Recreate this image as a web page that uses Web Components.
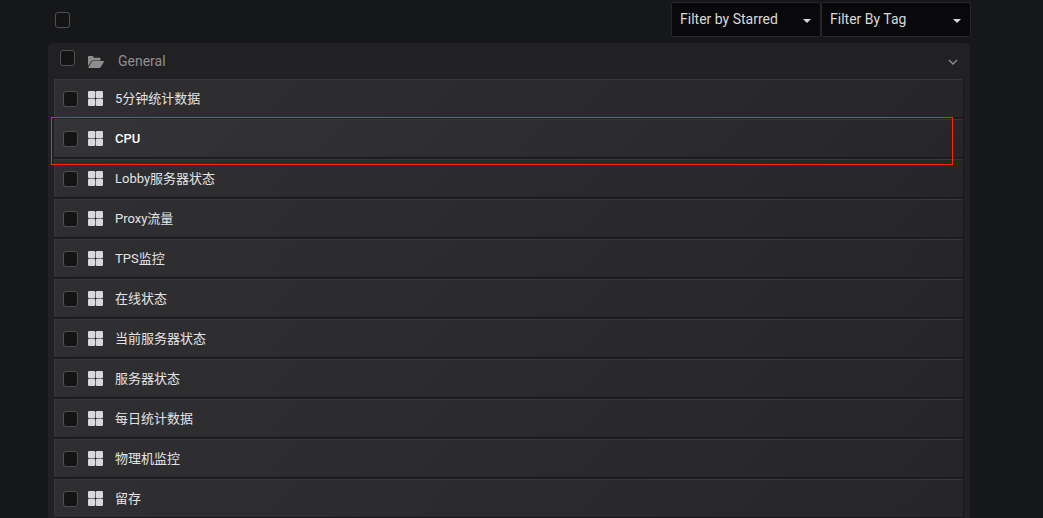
<!DOCTYPE html>
<html lang="zh-CN">
<head>
<meta charset="utf-8">
<title>Dashboards</title>
<style>
html { background: #161719; }
body { margin: 0; padding: 2px 72px 0 48px; background: #161719; color: #d8d9da; font: 14px/20px Roboto, "Noto Sans CJK SC", sans-serif; }
</style>
</head>
<body>
<dashboard-search></dashboard-search>
<script>
class CheckBox extends HTMLElement {
  connectedCallback() {
    this.attachShadow({ mode: 'open' }).innerHTML = `
      <style>
        :host { display: block; flex: none; width: 15px; height: 16px; }
        input { appearance: none; display: block; box-sizing: border-box; width: 15px; height: 16px; margin: 0; border: 1px solid #505053; border-radius: 3px; background: #141414; }
        input:checked { background: #33b5e5; }
      </style>
      <input type="checkbox">`;
    this.shadowRoot.querySelector('input').setAttribute('aria-label', this.getAttribute('label'));
  }
}
customElements.define('check-box', CheckBox);

class FilterSelect extends HTMLElement {
  connectedCallback() {
    const name = this.getAttribute('name');
    this.attachShadow({ mode: 'open' }).innerHTML = `
      <style>
        :host { display: block; position: relative; width: 150px; }
        select { appearance: none; box-sizing: border-box; display: block; width: 100%; height: 35px; margin: 0; padding: 0 24px 2px 8px; border: 1px solid #262628; border-radius: 2px; background: #09090b; color: #d8d9da; font: inherit; }
        svg { position: absolute; right: 10px; top: 16px; width: 8px; height: 5px; fill: #d8d9da; pointer-events: none; }
      </style>
      <select aria-label="${name}"><option>${name}</option></select>
      <svg viewBox="0 0 8 5" aria-hidden="true"><path d="M0 1h8L4 5z"/></svg>`;
  }
}
customElements.define('filter-select', FilterSelect);

class DashboardItem extends HTMLElement {
  connectedCallback() {
    this.attachShadow({ mode: 'open' }).innerHTML = `
      <style>
        :host { display: flex; align-items: center; position: relative; height: 37px; padding-left: 8px; background: linear-gradient(135deg, #2f2f32, #262628); box-shadow: -1px -1px 0 0 rgba(255,255,255,.1), 1px 1px 0 0 rgba(0,0,0,.3); }
        :host([marked]) { background: linear-gradient(135deg, #343436, #262628); }
        :host([marked])::after { content: ""; position: absolute; z-index: 1; inset: -3px 10px -8px -4px; border: 1px solid #ff260b; pointer-events: none; }
        svg { flex: none; width: 15px; height: 15px; margin: 0 12px 0 10px; fill: #d8d9da; }
        a { color: #e3e3e3; font-size: 13px; line-height: 20px; text-decoration: none; }
        :host([marked]) a { color: #fff; font-weight: 500; }
      </style>
      <check-box label="${this.textContent}"></check-box>
      <svg viewBox="0 0 15 15" aria-hidden="true"><rect width="7.200" height="7.200" rx="1.300"/><rect x="7.800" width="7.200" height="7.200" rx="1.300"/><rect y="7.800" width="7.200" height="7.200" rx="1.300"/><rect x="7.800" y="7.800" width="7.200" height="7.200" rx="1.300"/></svg>
      <a href="#"><slot></slot></a>`;
  }
}
customElements.define('dashboard-item', DashboardItem);

class DashboardFolder extends HTMLElement {
  connectedCallback() {
    this.attachShadow({ mode: 'open' }).innerHTML = `
      <style>
        :host { display: block; padding: 0 7px 1px; background: #212124; border-radius: 5px 5px 0 0; }
        header { display: flex; height: 37px; padding: 0 4px 0 5px; color: #8e8e8e; }
        check-box { margin-top: 7px; }
        .folder { width: 16px; height: 12px; margin: 13px 14px 0 13px; fill: #8e8e8e; }
        h2 { flex: 1; margin: 8px 0 0; font: inherit; }
        button { width: 12px; height: 12px; margin: 13px 0 0; padding: 0; border: 0; background: none; }
        .chevron { display: block; width: 12px; height: 12px; fill: none; stroke: #8e8e8e; stroke-width: 1.4; }
        .items { display: grid; gap: 3px; }
      </style>
      <header>
        <check-box label="General"></check-box>
        <svg class="folder" viewBox="0 0 16 12" aria-hidden="true"><path d="M0 10V1Q0 0 1 0h3.500q1 0 1 1v.7h6q1 0 1 1v1.700H5q-1.300 0-2 1z"/><path d="M.3 11.500 3.500 6q.6-.9 1.700-.9h10.200q.9 0 .4.900l-3 4.900q-.6 1.100-1.700 1.100H.7q-.7 0-.4-.5z"/></svg>
        <h2>General</h2>
        <button type="button" aria-label="Collapse"><svg class="chevron" viewBox="0 0 12 12"><path d="m2 4 4 4 4-4"/></svg></button>
      </header>
      <div class="items"><slot></slot></div>`;
  }
}
customElements.define('dashboard-folder', DashboardFolder);

class DashboardSearch extends HTMLElement {
  connectedCallback() {
    this.attachShadow({ mode: 'open' }).innerHTML = `
      <style>
        :host { display: block; }
        .bar { display: flex; align-items: center; margin-bottom: 6px; padding-left: 7px; }
        .bar check-box { margin-right: auto; }
        dashboard-folder { margin-right: 1px; }
      </style>
      <div class="bar">
        <check-box label="Select all"></check-box>
        <filter-select name="Filter by Starred"></filter-select>
        <filter-select name="Filter By Tag"></filter-select>
      </div>
      <dashboard-folder>
        <dashboard-item>5分钟统计数据</dashboard-item>
        <dashboard-item marked>CPU</dashboard-item>
        <dashboard-item>Lobby服务器状态</dashboard-item>
        <dashboard-item>Proxy流量</dashboard-item>
        <dashboard-item>TPS监控</dashboard-item>
        <dashboard-item>在线状态</dashboard-item>
        <dashboard-item>当前服务器状态</dashboard-item>
        <dashboard-item>服务器状态</dashboard-item>
        <dashboard-item>每日统计数据</dashboard-item>
        <dashboard-item>物理机监控</dashboard-item>
        <dashboard-item>留存</dashboard-item>
      </dashboard-folder>`;
  }
}
customElements.define('dashboard-search', DashboardSearch);
</script>
</body>
</html>
